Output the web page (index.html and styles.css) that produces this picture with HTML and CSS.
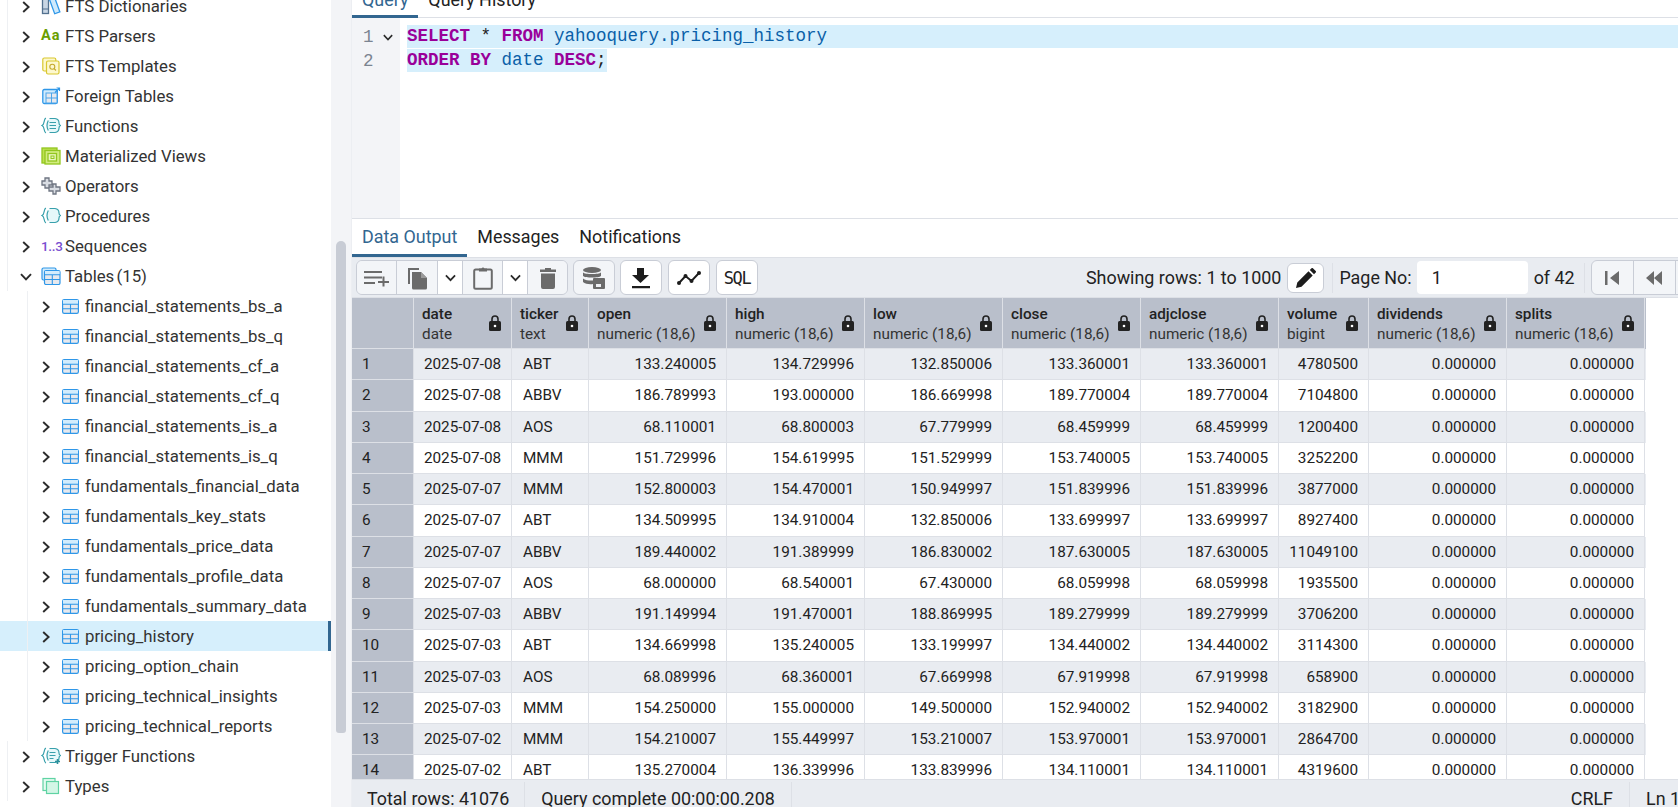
FILE: index.html
```html
<!DOCTYPE html>
<html lang="en">
<head>
<meta charset="utf-8">
<title>pgAdmin Query Tool</title>
<link rel="stylesheet" href="styles.css">
</head>
<body>
<svg class="defs" width="0" height="0" aria-hidden="true">
  <symbol id="right" viewBox="0 0 8 12"><path d="M1.2 1 6.6 6 1.2 11" fill="none" stroke="#2b2b2b" stroke-width="1.9"/></symbol>
  <symbol id="down" viewBox="0 0 12 8"><path d="M1 1.2 6 6.4 11 1.2" fill="none" stroke="#2b2b2b" stroke-width="1.9"/></symbol>
  <symbol id="table" viewBox="0 0 17 15"><rect x=".6" y=".6" width="15.8" height="13.8" rx="1.6" fill="#e7e9ee" stroke="#2f97e8" stroke-width="1.2"/><rect x="1" y="1" width="15" height="4" fill="#d2ecfd"/><path d="M1 5.3h15M1 9.8h15M8.5 5v9.5" stroke="#2f97e8" stroke-width="1.1" fill="none"/></symbol>
  <symbol id="lock" viewBox="0 0 12 16"><path d="M3 6.5V4a3 3 0 0 1 6 0v2.5" fill="none" stroke="#222" stroke-width="1.6"/><rect y="6" width="12" height="10" rx="1.5" fill="#222"/><circle cx="6" cy="11" r="1.3" fill="#fff"/></symbol>
  <symbol id="braces" viewBox="0 0 20 18"><path d="M7.5 3.5Q6 6 6 8.5T7.5 13.5L9 15.5h5Q18 15 18 11 18 9 19.5 8.5 18 8 18 6 18 2 14 1.5H9z" fill="#e6f8fa"/><path d="M5 1.2C2.300 1.800 4.200 7.300 1 8.500c3.200 1.200 1.300 6.700 4 7.300" fill="none" stroke="#38a0ac" stroke-width="1.2"/><path d="M8.500 1.500H14Q18 2 18 6 18 8 19.500 8.500 18 9 18 11 18 15 14 15.500H8.500M7.300 3.500Q6 6 6 8.500T7.300 13.500" fill="none" stroke="#38a0ac" stroke-width="1.2"/></symbol>
</svg>
<div class="app">
  <aside class="sidebar">
    <nav class="tree">
      <div class="node"><svg class="chev"><use href="#right"/></svg><svg class="ico" viewBox="0 0 20 18"><rect x="1.5" y="1" width="6" height="15.5" fill="#c9d6e4" stroke="#53718f" stroke-width="1.3"/><path d="M1.5 12h6" stroke="#53718f"/><rect x="11" y="1" width="5.5" height="15.5" transform="rotate(-20 13 9)" fill="#cfeafc" stroke="#2f97e8" stroke-width="1.3"/></svg><span>FTS Dictionaries</span></div>
      <div class="node"><svg class="chev"><use href="#right"/></svg><span class="ico aa">Aa</span><span>FTS Parsers</span></div>
      <div class="node"><svg class="chev"><use href="#right"/></svg><svg class="ico" viewBox="0 0 20 18"><rect x="1.8" y="1" width="13" height="13" rx="1.5" fill="#fdf8cf" stroke="#d9c72f" stroke-width="1.2"/><rect x="5.5" y="4" width="12.5" height="13" rx="1.5" fill="#fdf8cf" stroke="#d9c72f" stroke-width="1.2"/><circle cx="11.3" cy="9.7" r="2.5" fill="none" stroke="#c4a92a" stroke-width="1.1"/><path d="m13 11.500 2 2" stroke="#c4a92a" stroke-width="1.1"/></svg><span>FTS Templates</span></div>
      <div class="node"><svg class="chev"><use href="#right"/></svg><svg class="ico" viewBox="0 0 20 18"><rect x="1.8" y="2.5" width="14.5" height="14" rx="1.5" fill="#d2ecfd" stroke="#2f97e8" stroke-width="1.3"/><rect x="5" y="6" width="11" height="10" fill="#e7e9ee" stroke="#4da5ea"/><path d="M10.500 6v10M5 11h11" stroke="#4da5ea"/><path d="M14 5.500 18.500 1M15.500 1h3v3" fill="none" stroke="#2f97e8" stroke-width="1.2"/></svg><span>Foreign Tables</span></div>
      <div class="node"><svg class="chev"><use href="#right"/></svg><svg class="ico"><use href="#braces"/><path d="M8.500 5.500h6.500M8.500 8.500h6.500M8.500 11.500h6.500" stroke="#38a0ac" stroke-width="1.1"/></svg><span>Functions</span></div>
      <div class="node"><svg class="chev"><use href="#right"/></svg><svg class="ico" viewBox="0 0 20 18"><rect x="1" y="1" width="15" height="15" fill="#bce04f" stroke="#92c61e" stroke-width="1.3"/><rect x="4" y="3.5" width="15" height="13.5" fill="#d2ec80" stroke="#92c61e" stroke-width="1.3"/><rect x="7" y="6.5" width="8.5" height="7.5" fill="#eaf7be" stroke="#92c61e" stroke-width="1.3"/><rect x="10" y="9" width="3" height="2.500" fill="none" stroke="#92c61e"/></svg><span>Materialized Views</span></div>
      <div class="node"><svg class="chev"><use href="#right"/></svg><svg class="ico" viewBox="0 0 20 18"><path d="M4 1h4v3h3v4H8v3H4V8H1V4h3zM12 7h3v3h4v4h-4v3h-3v-3H8v-4h4z" fill="#d9dde3" stroke="#6f7682" stroke-width="1.3"/></svg><span>Operators</span></div>
      <div class="node"><svg class="chev"><use href="#right"/></svg><svg class="ico"><use href="#braces"/></svg><span>Procedures</span></div>
      <div class="node"><svg class="chev"><use href="#right"/></svg><span class="ico seq">1..3</span><span>Sequences</span></div>
      <div class="node"><svg class="chev down"><use href="#down"/></svg><svg class="ico" viewBox="0 0 20 18"><rect x="1" y="1" width="14" height="12" rx="1.5" fill="#d2ecfd" stroke="#2f97e8" stroke-width="1.2"/><rect x="3.5" y="3.5" width="15.5" height="14" rx="1.5" fill="#e7e9ee" stroke="#2f97e8" stroke-width="1.2"/><rect x="4" y="4" width="14.5" height="3.5" fill="#d2ecfd"/><path d="M3.500 7.800h15.500M3.500 12.500h15.500M11.300 7.800v9.700" stroke="#2f97e8" stroke-width="1.1"/></svg><span>Tables <span class="count">(15)</span></span></div>
      <div class="child"><svg class="chev"><use href="#right"/></svg><svg class="tbl"><use href="#table"/></svg><span>financial_statements_bs_a</span></div>
      <div class="child"><svg class="chev"><use href="#right"/></svg><svg class="tbl"><use href="#table"/></svg><span>financial_statements_bs_q</span></div>
      <div class="child"><svg class="chev"><use href="#right"/></svg><svg class="tbl"><use href="#table"/></svg><span>financial_statements_cf_a</span></div>
      <div class="child"><svg class="chev"><use href="#right"/></svg><svg class="tbl"><use href="#table"/></svg><span>financial_statements_cf_q</span></div>
      <div class="child"><svg class="chev"><use href="#right"/></svg><svg class="tbl"><use href="#table"/></svg><span>financial_statements_is_a</span></div>
      <div class="child"><svg class="chev"><use href="#right"/></svg><svg class="tbl"><use href="#table"/></svg><span>financial_statements_is_q</span></div>
      <div class="child"><svg class="chev"><use href="#right"/></svg><svg class="tbl"><use href="#table"/></svg><span>fundamentals_financial_data</span></div>
      <div class="child"><svg class="chev"><use href="#right"/></svg><svg class="tbl"><use href="#table"/></svg><span>fundamentals_key_stats</span></div>
      <div class="child"><svg class="chev"><use href="#right"/></svg><svg class="tbl"><use href="#table"/></svg><span>fundamentals_price_data</span></div>
      <div class="child"><svg class="chev"><use href="#right"/></svg><svg class="tbl"><use href="#table"/></svg><span>fundamentals_profile_data</span></div>
      <div class="child"><svg class="chev"><use href="#right"/></svg><svg class="tbl"><use href="#table"/></svg><span>fundamentals_summary_data</span></div>
      <div class="child selected"><svg class="chev"><use href="#right"/></svg><svg class="tbl"><use href="#table"/></svg><span>pricing_history</span></div>
      <div class="child"><svg class="chev"><use href="#right"/></svg><svg class="tbl"><use href="#table"/></svg><span>pricing_option_chain</span></div>
      <div class="child"><svg class="chev"><use href="#right"/></svg><svg class="tbl"><use href="#table"/></svg><span>pricing_technical_insights</span></div>
      <div class="child"><svg class="chev"><use href="#right"/></svg><svg class="tbl"><use href="#table"/></svg><span>pricing_technical_reports</span></div>
      <div class="node"><svg class="chev"><use href="#right"/></svg><svg class="ico"><use href="#braces"/><path d="M8.500 5.500h6M8.500 8.500h6M8.500 11.500h4" stroke="#38a0ac" stroke-width="1.1"/><path d="M16.500 12v5M14 14.500h5" stroke="#2b8f9b" stroke-width="1.6"/></svg><span>Trigger Functions</span></div>
      <div class="node"><svg class="chev"><use href="#right"/></svg><svg class="ico" viewBox="0 0 20 18"><rect x="2" y="1.5" width="12" height="12" fill="#e3faf0" stroke="#5fd3a3" stroke-width="1.2"/><rect x="5.500" y="4.500" width="12" height="12" fill="#d3f6e6" stroke="#5fd3a3" stroke-width="1.2"/></svg><span>Types</span></div>
    </nav>
    <div class="rail"><div class="thumb"></div></div>
  </aside>

  <main class="main">
    <div class="tabs query-tabs">
      <span class="tab active">Query</span><span class="tab">Query History</span>
    </div>
    <section class="editor">
      <div class="lines">
        <div class="ln"><span class="num">1</span><svg class="fold"><use href="#down"/></svg></div>
        <div class="ln"><span class="num">2</span></div>
      </div>
      <div class="code">
        <div class="sel full"><b>SELECT</b> * <b>FROM</b> <i>yahooquery.pricing_history</i></div>
        <div class="sel"><b>ORDER BY</b> <i>date</i> <b>DESC</b>;</div>
      </div>
    </section>

    <div class="tabs output-tabs">
      <span class="tab active">Data Output</span><span class="tab">Messages</span><span class="tab">Notifications</span>
    </div>

    <div class="toolbar">
      <div class="group">
        <button class="btn off w40"><svg width="28" height="18" viewBox="0 0 28 18"><path d="M1 3h18M1 8.500h18M1 14h11M15 13h11M20.500 7.500v10" fill="none" stroke="#6b6b6b" stroke-width="2"/></svg></button>
        <button class="btn off w41"><svg width="22" height="24" viewBox="0 0 22 24"><path d="M2 2h11v2H4v14H2z" fill="#6b6b6b"/><path d="M6 6h9l6 6v10a1.500 1.500 0 0 1-1.500 1.500h-12A1.500 1.500 0 0 1 6 22z" fill="#6b6b6b"/><path d="M15 6v6h6" fill="#9a9a9a"/></svg></button>
        <button class="btn w25"><svg class="mini"><use href="#down"/></svg></button>
        <button class="btn off w40"><svg width="20" height="24" viewBox="0 0 20 24"><rect x="1.200" y="3.500" width="17.600" height="19.300" rx="1.500" fill="none" stroke="#6b6b6b" stroke-width="2"/><path d="M6 5.500V2.500h2.500a1.600 1.600 0 0 1 3 0H14v3z" fill="#6b6b6b"/></svg></button>
        <button class="btn w25"><svg class="mini"><use href="#down"/></svg></button>
        <button class="btn off grow"><svg width="16" height="22" viewBox="0 0 16 22"><path d="M5 2.500V1h6v1.500h5V5H0V2.500zM1 6.500h14V20a2 2 0 0 1-2 2H3a2 2 0 0 1-2-2z" fill="#6b6b6b"/></svg></button>
      </div>
      <button class="tool off"><svg width="24" height="24" viewBox="0 0 24 24"><ellipse cx="10" cy="4" rx="9" ry="3" fill="#6b6b6b"/><path d="M1 6.500c2 2 16 2 18 0V10c-2 2-16 2-18 0zM1 12.500c2 2 8 2.300 10 2V18c-3 .5-8 0-10-2z" fill="#6b6b6b"/><path d="M12 12h10a1 1 0 0 1 1 1v9a1 1 0 0 1-1 1H12a1 1 0 0 1-1-1v-9a1 1 0 0 1 1-1z" fill="#6b6b6b"/><rect x="14" y="18" width="5" height="3" fill="#eef0f4"/></svg></button>
      <button class="tool"><svg width="20" height="22" viewBox="0 0 20 22"><path d="M6 1h7v7h5l-8.500 8L1 8h5zM1 19h18v2.300H1z" fill="#1c1c1c"/></svg></button>
      <button class="tool"><svg width="24" height="14" viewBox="0 0 24 14"><path d="M2 12 8.500 5l6 5L22 2" fill="none" stroke="#1c1c1c" stroke-width="2"/><g fill="#1c1c1c"><circle cx="2" cy="12" r="2"/><circle cx="8.500" cy="5" r="2"/><circle cx="14.500" cy="10" r="2"/><circle cx="22" cy="2" r="2"/></g></svg></button>
      <button class="tool sql">SQL</button>
      <div class="pager">
        <span class="pt">Showing rows: 1 to 1000</span>
        <button class="edit"><svg width="20" height="20" viewBox="0 0 20 20"><path d="M0 20l1.300-5.500L12.500 3.300l4.200 4.200L5.500 18.700zM13.800 2 15.500.3a1 1 0 0 1 1.400 0l2.800 2.800a1 1 0 0 1 0 1.400L18 6.200z" fill="#1c1c1c"/></svg></button>
        <span class="sep"></span>
        <span class="pt">Page No:</span>
        <span class="page-input">1</span>
        <span class="pt">of 42</span>
        <span class="sep end"></span>
        <div class="nav">
          <button class="nav-btn"><svg width="16" height="14" viewBox="0 0 16 14"><path d="M1 0h2.500v14H1zM15 0v14L6 7z" fill="#6b6b6b"/></svg></button>
          <button class="nav-btn"><svg width="18" height="14" viewBox="0 0 18 14"><path d="M9 0v14L1 7zM17 0v14L9 7z" fill="#6b6b6b"/></svg></button>
          <button class="nav-btn"></button>
        </div>
      </div>
    </div>

    <section class="grid">
      <div class="row head">
        <div class="c rn"></div>
        <div class="c hd"><div class="hn">date<small>date</small></div><svg class="lk"><use href="#lock"/></svg></div>
        <div class="c hd"><div class="hn">ticker<small>text</small></div><svg class="lk"><use href="#lock"/></svg></div>
        <div class="c hd"><div class="hn">open<small>numeric (18,6)</small></div><svg class="lk"><use href="#lock"/></svg></div>
        <div class="c hd"><div class="hn">high<small>numeric (18,6)</small></div><svg class="lk"><use href="#lock"/></svg></div>
        <div class="c hd"><div class="hn">low<small>numeric (18,6)</small></div><svg class="lk"><use href="#lock"/></svg></div>
        <div class="c hd"><div class="hn">close<small>numeric (18,6)</small></div><svg class="lk"><use href="#lock"/></svg></div>
        <div class="c hd"><div class="hn">adjclose<small>numeric (18,6)</small></div><svg class="lk"><use href="#lock"/></svg></div>
        <div class="c hd"><div class="hn">volume<small>bigint</small></div><svg class="lk"><use href="#lock"/></svg></div>
        <div class="c hd"><div class="hn">dividends<small>numeric (18,6)</small></div><svg class="lk"><use href="#lock"/></svg></div>
        <div class="c hd"><div class="hn">splits<small>numeric (18,6)</small></div><svg class="lk"><use href="#lock"/></svg></div>
      </div>
      <div class="row odd"><div class="c rn">1</div><div class="c d">2025-07-08</div><div class="c t">ABT</div><div class="c">133.240005</div><div class="c">134.729996</div><div class="c">132.850006</div><div class="c">133.360001</div><div class="c">133.360001</div><div class="c">4780500</div><div class="c">0.000000</div><div class="c">0.000000</div></div>
      <div class="row"><div class="c rn">2</div><div class="c d">2025-07-08</div><div class="c t">ABBV</div><div class="c">186.789993</div><div class="c">193.000000</div><div class="c">186.669998</div><div class="c">189.770004</div><div class="c">189.770004</div><div class="c">7104800</div><div class="c">0.000000</div><div class="c">0.000000</div></div>
      <div class="row odd"><div class="c rn">3</div><div class="c d">2025-07-08</div><div class="c t">AOS</div><div class="c">68.110001</div><div class="c">68.800003</div><div class="c">67.779999</div><div class="c">68.459999</div><div class="c">68.459999</div><div class="c">1200400</div><div class="c">0.000000</div><div class="c">0.000000</div></div>
      <div class="row"><div class="c rn">4</div><div class="c d">2025-07-08</div><div class="c t">MMM</div><div class="c">151.729996</div><div class="c">154.619995</div><div class="c">151.529999</div><div class="c">153.740005</div><div class="c">153.740005</div><div class="c">3252200</div><div class="c">0.000000</div><div class="c">0.000000</div></div>
      <div class="row odd"><div class="c rn">5</div><div class="c d">2025-07-07</div><div class="c t">MMM</div><div class="c">152.800003</div><div class="c">154.470001</div><div class="c">150.949997</div><div class="c">151.839996</div><div class="c">151.839996</div><div class="c">3877000</div><div class="c">0.000000</div><div class="c">0.000000</div></div>
      <div class="row"><div class="c rn">6</div><div class="c d">2025-07-07</div><div class="c t">ABT</div><div class="c">134.509995</div><div class="c">134.910004</div><div class="c">132.850006</div><div class="c">133.699997</div><div class="c">133.699997</div><div class="c">8927400</div><div class="c">0.000000</div><div class="c">0.000000</div></div>
      <div class="row odd"><div class="c rn">7</div><div class="c d">2025-07-07</div><div class="c t">ABBV</div><div class="c">189.440002</div><div class="c">191.389999</div><div class="c">186.830002</div><div class="c">187.630005</div><div class="c">187.630005</div><div class="c">11049100</div><div class="c">0.000000</div><div class="c">0.000000</div></div>
      <div class="row"><div class="c rn">8</div><div class="c d">2025-07-07</div><div class="c t">AOS</div><div class="c">68.000000</div><div class="c">68.540001</div><div class="c">67.430000</div><div class="c">68.059998</div><div class="c">68.059998</div><div class="c">1935500</div><div class="c">0.000000</div><div class="c">0.000000</div></div>
      <div class="row odd"><div class="c rn">9</div><div class="c d">2025-07-03</div><div class="c t">ABBV</div><div class="c">191.149994</div><div class="c">191.470001</div><div class="c">188.869995</div><div class="c">189.279999</div><div class="c">189.279999</div><div class="c">3706200</div><div class="c">0.000000</div><div class="c">0.000000</div></div>
      <div class="row"><div class="c rn">10</div><div class="c d">2025-07-03</div><div class="c t">ABT</div><div class="c">134.669998</div><div class="c">135.240005</div><div class="c">133.199997</div><div class="c">134.440002</div><div class="c">134.440002</div><div class="c">3114300</div><div class="c">0.000000</div><div class="c">0.000000</div></div>
      <div class="row odd"><div class="c rn">11</div><div class="c d">2025-07-03</div><div class="c t">AOS</div><div class="c">68.089996</div><div class="c">68.360001</div><div class="c">67.669998</div><div class="c">67.919998</div><div class="c">67.919998</div><div class="c">658900</div><div class="c">0.000000</div><div class="c">0.000000</div></div>
      <div class="row"><div class="c rn">12</div><div class="c d">2025-07-03</div><div class="c t">MMM</div><div class="c">154.250000</div><div class="c">155.000000</div><div class="c">149.500000</div><div class="c">152.940002</div><div class="c">152.940002</div><div class="c">3182900</div><div class="c">0.000000</div><div class="c">0.000000</div></div>
      <div class="row odd"><div class="c rn">13</div><div class="c d">2025-07-02</div><div class="c t">MMM</div><div class="c">154.210007</div><div class="c">155.449997</div><div class="c">153.210007</div><div class="c">153.970001</div><div class="c">153.970001</div><div class="c">2864700</div><div class="c">0.000000</div><div class="c">0.000000</div></div>
      <div class="row"><div class="c rn">14</div><div class="c d">2025-07-02</div><div class="c t">ABT</div><div class="c">135.270004</div><div class="c">136.339996</div><div class="c">133.839996</div><div class="c">134.110001</div><div class="c">134.110001</div><div class="c">4319600</div><div class="c">0.000000</div><div class="c">0.000000</div></div>
    </section>

    <footer class="status">
      <span class="st first">Total rows: 41076</span>
      <span class="st">Query complete 00:00:00.208</span>
      <span class="st crlf">CRLF</span>
      <span class="st last">Ln 1, Col 1</span>
    </footer>
  </main>
</div>
</body>
</html>
```

FILE: styles.css
```css
* { box-sizing: border-box; }
html, body { margin: 0; height: 100%; overflow: hidden; }
body { font-family: Roboto, "Liberation Sans", sans-serif; color: #222; background: #fff; }
.defs { position: absolute; }
.app { display: flex; width: 1678px; height: 807px; overflow: hidden; }

/* sidebar */
.sidebar { flex: 0 0 352px; display: flex; height: 807px; overflow: hidden; }
.tree { flex: 0 0 331px; background: #fff; margin-top: -9px; font-size: 16.8px; color: #333; }
.node, .child { display: flex; align-items: center; height: 30px; white-space: nowrap; }
.node { padding-left: 22px; position: relative; }
.node::before { content: ""; position: absolute; left: 7px; top: 0; bottom: 0; width: 1px; background: #eef0f3; }
.child { padding-left: 42px; position: relative; }
.child::before { content: ""; position: absolute; left: 27px; top: 0; bottom: 0; width: 1px; background: #eef0f3; }
.chev { flex: none; width: 8px; height: 12px; margin-top: 2px; }
.chev.down { width: 12px; height: 8px; margin-left: -2px; margin-right: -2px; }
.ico { flex: none; width: 20px; height: 18px; margin: 0 4px 0 11px; }
.aa { font-weight: 700; font-size: 14.5px; line-height: 18px; color: #6a9e00; letter-spacing: 1px; white-space: nowrap; }
.seq { font-weight: 500; font-size: 13.5px; line-height: 18px; color: #7a4fd0; white-space: nowrap; letter-spacing: -.3px; }
.count { margin-left: -2px; }
.tbl { flex: none; width: 17px; height: 15px; margin: 0 6px 0 12px; }
.child.selected { background: #d6effc; box-shadow: inset -3px 0 0 #326690; }
.rail { flex: 1; background: #f3f4f7; border-right: 1px solid #eceef2; padding: 241px 5px 0; }
.thumb { width: 10px; height: 492px; background: #c8ccd5; border-radius: 5px 5px 3px 3px; }

/* main */
.main { flex: 1; min-width: 0; display: flex; flex-direction: column; height: 807px; overflow: hidden; }
.tabs { display: flex; flex: none; height: 38px; border-bottom: 1px solid #dde0e6; font-size: 17.9px; }
.query-tabs { margin-top: -20px; }
.tab { display: flex; align-items: center; padding: 0 10px; color: #222; margin-bottom: -1px; }
.tab.active { color: #326690; box-shadow: inset 0 -3px 0 #326690; }
.output-tabs { border-top: 1px solid #dde0e6; border-bottom: 0; height: 39px; }
.output-tabs .tab { padding-bottom: 4px; margin-bottom: 0; }
.editor { flex: none; display: flex; height: 200px; }
.lines { flex: 0 0 48px; background: #f3f4f7; padding-top: 7px; color: #7b8491; font: 17.5px/24px "Liberation Mono", monospace; }
.ln { height: 24px; padding-left: 11px; display: flex; align-items: center; }
.num { width: 20px; }
.fold { width: 10px; height: 7px; }
.code { flex: 1; padding: 7px 0 0 7px; font: 17.5px/24px "Liberation Mono", monospace; color: #222; }
.sel { width: max-content; white-space: pre; background: #d6effc; height: 23px; margin-bottom: 1px; line-height: 23px; }
.sel.full { width: auto; }
.sel b { color: #990099; font-weight: 700; }
.sel i { color: #0a5fa8; font-style: normal; }

/* toolbar */
.toolbar { flex: none; height: 41px; display: flex; align-items: center; gap: 6px; padding-left: 4px; background: #e9ecf1; border-top: 1px solid #dde0e6; border-bottom: 1px solid #dde0e6; white-space: nowrap; font-size: 17.9px; overflow: hidden; }
.group { display: flex; flex: none; width: 212px; height: 35px; border: 1px solid #c9cdd6; border-radius: 6px; overflow: hidden; margin-right: -1px; }
.btn { display: flex; align-items: center; justify-content: center; padding: 0; height: 100%; background: #fff; border: 0; border-right: 1px solid #c9cdd6; }
.btn:last-child { border-right: 0; }
.btn.off { background: #f3f5f8; }
.w40 { width: 40px; }
.w41 { width: 41px; }
.w25 { width: 25px; }
.grow { flex: 1; }
.mini { width: 11px; height: 8px; }
.tool { display: flex; flex: none; align-items: center; justify-content: center; width: 42px; height: 35px; padding: 0; background: #fff; border: 1px solid #c9cdd6; border-radius: 6px; }
.tool.off { background: #f3f5f8; margin-right: -1px; }
.sql { font: 400 17px "DejaVu Sans Mono", monospace; color: #222; letter-spacing: -1.4px; }
.pager { display: flex; flex: none; align-items: center; margin-left: auto; width: 592px; color: #222; overflow: hidden; }
.pt { flex: none; }
.edit { display: flex; flex: none; align-items: center; justify-content: center; width: 37px; height: 30px; margin: 0 8px 0 6px; padding: 0; background: #fff; border: 1px solid #c9cdd6; border-radius: 6px; }
.sep { flex: none; width: 1px; height: 30px; background: #dde0e6; margin-right: 6px; }
.sep.end { margin: 0 6px 0 9px; }
.page-input { flex: none; width: 111px; height: 33px; margin: 0 6px 0 5px; padding-left: 15px; line-height: 33px; background: #fff; border-radius: 4px; }
.nav { display: flex; flex: none; height: 35px; border: 1px solid #c9cdd6; border-radius: 6px 0 0 6px; background: #f3f5f8; }
.nav-btn { display: flex; flex: none; align-items: center; justify-content: center; width: 42px; padding: 0; background: none; border: 0; border-right: 1px solid #c9cdd6; }

/* grid */
.grid { flex: 1; min-height: 0; overflow: hidden; font-size: 15.3px; }
.row { display: grid; grid-template-columns: 62px 98px 77px repeat(5, 138px) 90px 138px 138px; width: 1294px; height: 31.25px; }
.row.odd { background: #e9ecf1; }
.row.head { height: 51px; background: #b9bfcb; }
.c { display: flex; align-items: center; justify-content: flex-end; padding: 0 10px; min-width: 0; border-right: 1px solid #dde0e6; border-bottom: 1px solid #dde0e6; white-space: nowrap; color: #222; }
.c.d { justify-content: center; padding: 0; }
.c.t { justify-content: flex-start; padding-left: 11px; }
.c.rn { justify-content: flex-start; background: #b9bfcb; padding-left: 10px; }
.c.hd { justify-content: space-between; padding: 0 10px 0 8px; }
.hn { font-weight: 500; line-height: 20px; color: #222; margin-top: 2px; }
.hn small { display: block; font-size: 15.3px; font-weight: 400; color: #333; }
.lk { flex: none; width: 12px; height: 16px; }

/* status */
.status { flex: none; display: flex; height: 28px; background: #e9ecf1; border-top: 1px solid #dde0e6; font-size: 17.9px; white-space: nowrap; overflow: hidden; }
.st { display: flex; align-items: center; padding: 2px 16px 0; border-right: 1px solid #dde0e6; margin-top: 2px; height: 30px; }
.first { padding-left: 15px; padding-right: 15px; }
.crlf { margin-left: auto; }
.last { border-right: 0; width: 48px; }
```
